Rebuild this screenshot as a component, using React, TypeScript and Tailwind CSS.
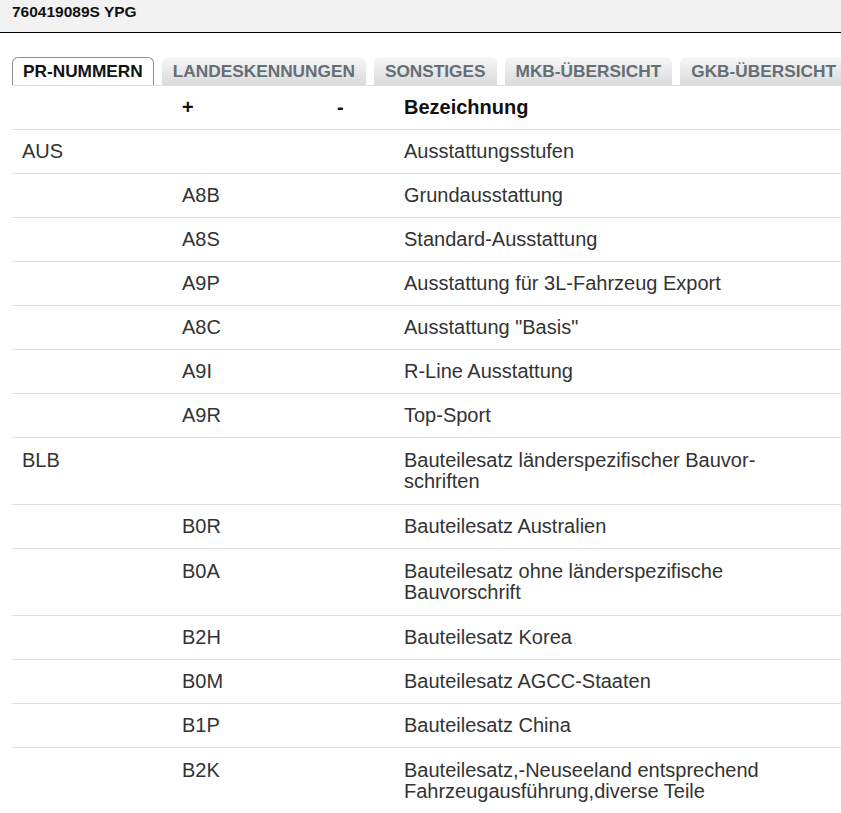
import React from "react";

type Row = {
  group?: string;
  code?: string;
  lines: string[];
};

const tabs = [
  "PR-NUMMERN",
  "LANDESKENNUNGEN",
  "SONSTIGES",
  "MKB-ÜBERSICHT",
  "GKB-ÜBERSICHT",
];

const rows: Row[] = [
  { group: "AUS", lines: ["Ausstattungsstufen"] },
  { code: "A8B", lines: ["Grundausstattung"] },
  { code: "A8S", lines: ["Standard-Ausstattung"] },
  { code: "A9P", lines: ["Ausstattung für 3L-Fahrzeug Export"] },
  { code: "A8C", lines: ['Ausstattung "Basis"'] },
  { code: "A9I", lines: ["R-Line Ausstattung"] },
  { code: "A9R", lines: ["Top-Sport"] },
  {
    group: "BLB",
    lines: ["Bauteilesatz länderspezifischer Bauvor-", "schriften"],
  },
  { code: "B0R", lines: ["Bauteilesatz Australien"] },
  {
    code: "B0A",
    lines: ["Bauteilesatz ohne länderspezifische", "Bauvorschrift"],
  },
  { code: "B2H", lines: ["Bauteilesatz Korea"] },
  { code: "B0M", lines: ["Bauteilesatz AGCC-Staaten"] },
  { code: "B1P", lines: ["Bauteilesatz China"] },
  {
    code: "B2K",
    lines: [
      "Bauteilesatz,-Neuseeland entsprechend",
      "Fahrzeugausführung,diverse Teile",
    ],
  },
];

const grid = "grid grid-cols-[160px_155px_67px_1fr]";

function Tab({ label, active }: { label: string; active?: boolean }) {
  if (active) {
    return (
      <div className="h-[28px] shrink-0 rounded-t-[6px] border border-b-0 border-[#8e8e8e] bg-white pl-[10px] pr-[10px] text-[17.25px] leading-[27px] font-bold text-[#111]">
        {label}
      </div>
    );
  }
  return (
    <div className="h-[28px] shrink-0 rounded-t-[6px] bg-linear-to-b from-[#f7f7f7] to-[#dadada] px-[11px] text-[17.25px] leading-[28px] font-bold text-[#646e76]">
      {label}
    </div>
  );
}

export default function App() {
  return (
    <div
      className="h-[813px] w-full overflow-hidden bg-white"
      style={{ fontFamily: '"Liberation Sans", Arial, sans-serif' }}
    >
      {/* title bar */}
      <div className="h-[33px] border-b border-black bg-[#f2f2f2] pl-[12px] pt-[3px] text-[15.5px] leading-[18px] font-bold text-[#111]">
        760419089S YPG
      </div>

      {/* tabs */}
      <div className="mt-[24px] ml-[12px] flex gap-[8px] overflow-hidden whitespace-nowrap">
        {tabs.map((t, i) => (
          <Tab key={t} label={t} active={i === 0} />
        ))}
      </div>

      {/* table */}
      <div className="ml-[12px] border-t border-[#dedede]">
        <div
          className={`${grid} h-[44px] border-b border-[#dedede] text-[20px] leading-[21px] font-bold text-[#111]`}
        >
          <div className="pl-[10px] pt-[11px]"></div>
          <div className="pl-[10px] pt-[11px]">+</div>
          <div className="pl-[10px] pt-[11px]">-</div>
          <div className="pl-[10px] pt-[11px]">Bezeichnung</div>
        </div>

        {rows.map((r, i) => {
          const double = r.lines.length > 1;
          return (
            <div
              key={i}
              className={`${grid} border-b border-[#dedede] text-[20px] leading-[21px] text-[#333] ${
                double ? "h-[67px] pt-[12px]" : "h-[44px] pt-[11px]"
              }`}
            >
              <div className="pl-[10px]">{r.group ?? ""}</div>
              <div className="pl-[10px]">{r.code ?? ""}</div>
              <div className="pl-[10px]"></div>
              <div className="pl-[10px]">
                {r.lines.map((l, j) => (
                  <div key={j}>{l}</div>
                ))}
              </div>
            </div>
          );
        })}
      </div>
    </div>
  );
}
